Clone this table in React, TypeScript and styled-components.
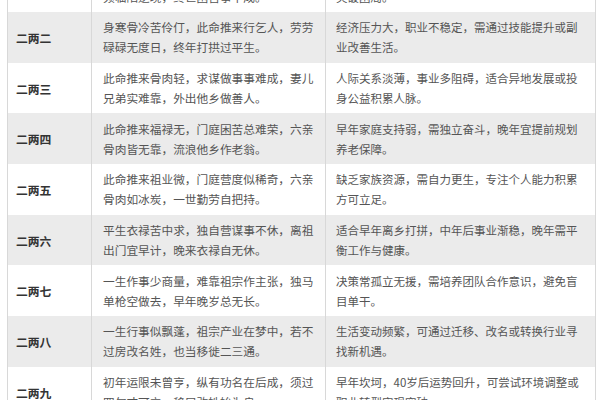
import React from "react";
import styled, { createGlobalStyle } from "styled-components";

const GlobalStyle = createGlobalStyle`
  html, body {
    margin: 0;
    padding: 0;
    background: #ffffff;
  }
  body {
    width: 600px;
    height: 400px;
    overflow: hidden;
    font-family: "Noto Sans CJK SC", "Noto Sans", sans-serif;
  }
`;

const Page = styled.div`
  width: 600px;
  height: 400px;
  overflow: hidden;
  padding-left: 7px;
  box-sizing: border-box;
`;

// the first row sits partly above the top edge of the picture
const Table = styled.div`
  width: 589px;
  margin-top: -38.7px;
  display: flex;
  flex-direction: column;
`;

const Row = styled.div<{ $shade: boolean }>`
  display: grid;
  grid-template-columns: 84px 234px 271px;
  height: 50.7px;
  background: ${({ $shade }) => ($shade ? "#ebebeb" : "#ffffff")};
`;

const Cell = styled.div`
  display: flex;
  flex-direction: column;
  justify-content: center;
  border-left: 1px solid #d8d8d8;
  overflow: hidden;
  box-sizing: border-box;
  &:last-child {
    border-right: 1px solid #d8d8d8;
  }
`;

const LabelCell = styled(Cell)`
  padding-left: 8px;
  font-size: 11.8px;
  font-weight: 700;
  color: #333333;
`;

const TextCell = styled(Cell)<{ $pad: number; $size: number }>`
  padding-left: ${({ $pad }) => $pad}px;
  font-size: ${({ $size }) => $size}px;
  line-height: 20px;
  color: #555555;
`;

const Line = styled.span`
  display: block;
  white-space: nowrap;
`;

type Entry = { label: string; verse: string[]; advice: string[] };

const entries: Entry[] = [
  {
    label: "二两一",
    verse: ["短命非业谓大空，平生灾难事重重，凶祸", "频临陷逆境，终世困苦事不成。"],
    advice: ["命运多舛，易遇挫折，需坚定意志，积极寻求", "突破困局。"],
  },
  {
    label: "二两二",
    verse: ["身寒骨冷苦伶仃，此命推来行乞人，劳劳", "碌碌无度日，终年打拱过平生。"],
    advice: ["经济压力大，职业不稳定，需通过技能提升或副", "业改善生活。"],
  },
  {
    label: "二两三",
    verse: ["此命推来骨肉轻，求谋做事事难成，妻儿", "兄弟实难靠，外出他乡做善人。"],
    advice: ["人际关系淡薄，事业多阻碍，适合异地发展或投", "身公益积累人脉。"],
  },
  {
    label: "二两四",
    verse: ["此命推来福禄无，门庭困苦总难荣，六亲", "骨肉皆无靠，流浪他乡作老翁。"],
    advice: ["早年家庭支持弱，需独立奋斗，晚年宜提前规划", "养老保障。"],
  },
  {
    label: "二两五",
    verse: ["此命推来祖业微，门庭营度似稀奇，六亲", "骨肉如冰炭，一世勤劳自把持。"],
    advice: ["缺乏家族资源，需自力更生，专注个人能力积累", "方可立足。"],
  },
  {
    label: "二两六",
    verse: ["平生衣禄苦中求，独自营谋事不休，离祖", "出门宜早计，晚来衣禄自无休。"],
    advice: ["适合早年离乡打拼，中年后事业渐稳，晚年需平", "衡工作与健康。"],
  },
  {
    label: "二两七",
    verse: ["一生作事少商量，难靠祖宗作主张，独马", "单枪空做去，早年晚岁总无长。"],
    advice: ["决策常孤立无援，需培养团队合作意识，避免盲", "目单干。"],
  },
  {
    label: "二两八",
    verse: ["一生行事似飘蓬，祖宗产业在梦中，若不", "过房改名姓，也当移徙二三通。"],
    advice: ["生活变动频繁，可通过迁移、改名或转换行业寻", "找新机遇。"],
  },
  {
    label: "二两九",
    verse: ["初年运限未曾亨，纵有功名在后成，须过", "四旬才可立，移居改姓始为良。"],
    advice: ["早年坎坷，40岁后运势回升，可尝试环境调整或", "职业转型实现突破。"],
  },
];

export default function App() {
  return (
    <>
      <GlobalStyle />
      <Page>
        <Table>
          {entries.map((e, i) => (
            <Row key={e.label} $shade={i % 2 === 1}>
              <LabelCell>{e.label}</LabelCell>
              <TextCell $pad={11} $size={11.7}>
                {e.verse.map((l) => (
                  <Line key={l}>{l}</Line>
                ))}
              </TextCell>
              <TextCell $pad={10} $size={11.5}>
                {e.advice.map((l) => (
                  <Line key={l}>{l}</Line>
                ))}
              </TextCell>
            </Row>
          ))}
        </Table>
      </Page>
    </>
  );
}
